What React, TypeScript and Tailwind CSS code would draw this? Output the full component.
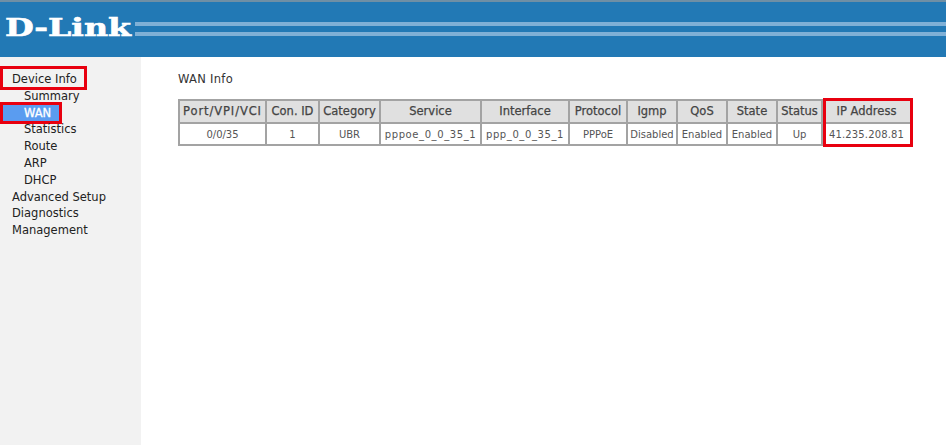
const columns = [
  { head: 'Port/VPI/VCI', value: '0/0/35', width: 'w-[87px]', headClass: 'tracking-[0.9px]', valueClass: '' },
  { head: 'Con. ID', value: '1', width: 'w-[53px]', headClass: '', valueClass: '' },
  { head: 'Category', value: 'UBR', width: 'w-[61px]', headClass: '', valueClass: '' },
  { head: 'Service', value: 'pppoe_0_0_35_1', width: 'w-[101px]', headClass: '', valueClass: 'tracking-[0.6px]' },
  { head: 'Interface', value: 'ppp_0_0_35_1', width: 'w-[88px]', headClass: '', valueClass: 'tracking-[0.6px]' },
  { head: 'Protocol', value: 'PPPoE', width: 'w-[58px]', headClass: '', valueClass: '' },
  { head: 'Igmp', value: 'Disabled', width: 'w-[50px]', headClass: '', valueClass: '' },
  { head: 'QoS', value: 'Enabled', width: 'w-[50px]', headClass: '', valueClass: '' },
  { head: 'State', value: 'Enabled', width: 'w-[50px]', headClass: '', valueClass: '' },
  { head: 'Status', value: 'Up', width: 'w-[45px]', headClass: '', valueClass: '' },
  { head: 'IP Address', value: '41.235.208.81', width: 'w-[89px]', headClass: '', valueClass: 'tracking-[0.15px]' },
];

const subItems = ['Summary', 'WAN', 'Statistics', 'Route', 'ARP', 'DHCP'];
const mainItems = ['Advanced Setup', 'Diagnostics', 'Management'];

function Table() {
  return (
    <div className="relative mt-[11px] w-fit">
      <table className="table-fixed border-collapse border-2 border-[#a3a3a3]">
        <thead>
          <tr className="h-[23px] bg-[#e0e0e0]">
            {columns.map((c) => (
              <th
                key={c.head}
                className={`${c.width} ${c.headClass} border-2 border-[#a3a3a3] p-0 text-center text-[11.5px] font-normal whitespace-nowrap text-[#444] [-webkit-text-stroke:0.25px_#444]`}
              >
                {c.head}
              </th>
            ))}
          </tr>
        </thead>
        <tbody>
          <tr className="h-[22px] bg-white">
            {columns.map((c) => (
              <td
                key={c.head}
                className={`${c.width} ${c.valueClass} border-2 border-[#a3a3a3] p-0 text-center text-[10px] whitespace-nowrap text-[#555]`}
              >
                {c.value}
              </td>
            ))}
          </tr>
        </tbody>
      </table>
      {/* red annotation over the last column */}
      <div className="absolute top-[-1px] right-[-1px] bottom-[-1px] w-[90px] border-[3px] border-[#e8000f]" />
    </div>
  );
}

export default function App() {
  return (
    <div className="flex h-[445px] w-[946px] flex-col overflow-hidden bg-white font-['DejaVu_Sans',sans-serif]">
      {/* Header */}
      <div className="flex h-[57px] items-center border-t-2 border-[#6f8fa5] bg-[#2279b5]">
        <div className="w-[135px] pl-[5px]">
          <span className="inline-block origin-left scale-x-[1.38] font-['DejaVu_Serif',serif] text-[24px] leading-none font-bold text-white [-webkit-text-stroke:0.6px_#fff]">
            D-Link
          </span>
        </div>
        <div className="flex flex-1 flex-col gap-[6px] pb-[2px]">
          <div className="h-[4px] bg-[#7fb0d6]" />
          <div className="h-[4px] bg-[#7fb0d6]" />
        </div>
      </div>

      <div className="flex flex-1">
        {/* Sidebar */}
        <div className="w-[141px] bg-[#f2f2f2] pt-[14px] text-[11.5px] leading-[16.8px] text-[#222]">
          <div className="relative pl-[12px]">
            Device Info
            <div className="absolute top-[-5px] left-0 h-[24px] w-[87px] border-[3px] border-[#e8000f]" />
          </div>
          <div className="flex flex-col">
            {subItems.map((item) =>
              item === 'WAN' ? (
                <div
                  key={item}
                  className="ml-[3px] h-[16.8px] w-[56px] bg-[#5a9cf0] pl-[21px] text-white outline-[3px] outline-[#e8000f] [-webkit-text-stroke:0.3px_#fff]"
                >
                  {item}
                </div>
              ) : (
                <div key={item} className="pl-[24px]">
                  {item}
                </div>
              ),
            )}
          </div>
          {mainItems.map((item) => (
            <div key={item} className="pl-[12px]">
              {item}
            </div>
          ))}
        </div>

        {/* Content */}
        <div className="flex-1 pt-[14px] pl-[37px]">
          <div className="text-[11.5px] leading-[17px] tracking-[0.3px] text-[#333]">WAN Info</div>
          <Table />
        </div>
      </div>
    </div>
  );
}
